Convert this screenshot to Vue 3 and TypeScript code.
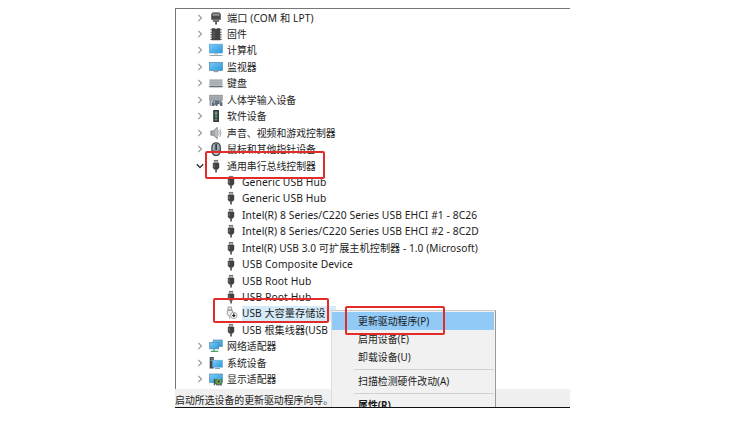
<script setup lang="ts">
interface Row {
  label: string
  icon: string
  child?: boolean
  open?: boolean
  selected?: boolean
  tone?: string
}

const usb = (label: string, tone = 'latin'): Row => ({ label, icon: 'usb', child: true, tone })

const rows: Row[] = [
  { label: '端口 (COM 和 LPT)', icon: 'port', tone: 'ports' },
  { label: '固件', icon: 'chip' },
  { label: '计算机', icon: 'computer' },
  { label: '监视器', icon: 'monitor' },
  { label: '键盘', icon: 'keyboard' },
  { label: '人体学输入设备', icon: 'hid' },
  { label: '软件设备', icon: 'software' },
  { label: '声音、视频和游戏控制器', icon: 'sound' },
  { label: '鼠标和其他指针设备', icon: 'mouse' },
  { label: '通用串行总线控制器', icon: 'usb', open: true },
  usb('Generic USB Hub'),
  usb('Generic USB Hub'),
  usb('Intel(R) 8 Series/C220 Series USB EHCI #1 - 8C26', 'latin long'),
  usb('Intel(R) 8 Series/C220 Series USB EHCI #2 - 8C2D', 'latin long'),
  usb('Intel(R) USB 3.0 可扩展主机控制器 - 1.0 (Microsoft)', 'mixed'),
  usb('USB Composite Device'),
  usb('USB Root Hub'),
  usb('USB Root Hub'),
  { label: 'USB 大容量存储设', icon: 'usbdown', child: true, selected: true, tone: 'mixed' },
  usb('USB 根集线器(USB', 'mixed'),
  { label: '网络适配器', icon: 'network' },
  { label: '系统设备', icon: 'system' },
  { label: '显示适配器', icon: 'display' },
]
</script>

<template>
  <main class="window">
    <ul class="tree">
      <li v-for="(row, i) in rows" :key="i" class="row" :class="{ child: row.child }">
        <svg v-if="!row.child" class="arrow" viewBox="0 0 8 8">
          <path v-if="row.open" d="M0.8 2.2 4 5.4 7.2 2.2" class="arrow-open" />
          <path v-else d="M2.3 0.8 5.5 4 2.3 7.2" class="arrow-closed" />
        </svg>
        <svg class="icon" viewBox="0 0 14 14">
          <defs>
            <linearGradient id="screen" x1="0" y1="0" x2="1" y2="1">
              <stop offset="0" stop-color="#7dcbf5" />
              <stop offset="1" stop-color="#279be0" />
            </linearGradient>
          </defs>
          <g v-if="row.icon === 'port'">
            <path d="M3.2 1.2h7.6v2H3.2z" fill="#777" />
            <path d="M2.2 2.6h9.6v6.2H2.2z" fill="#4c4c4c" />
            <path d="M3.6 3.2h6.8v1.4H3.6z" fill="#a5a5a5" />
            <path d="M3.8 8.8h6.4v2.2H3.8z" fill="#8b8b8b" />
            <path d="M5 8.8v2M7 8.8v2M9 8.8v2" stroke="#4a4a4a" stroke-width=".7" />
            <path d="M6.2 10.8h1.7v2.8H6.2z" fill="#444" />
          </g>
          <g v-else-if="row.icon === 'chip'">
            <path d="M2.8 1.2h2.8l1.4.9 1.4-.9h2.8v12H2.8z" fill="#434343" />
            <path d="M1.5 2.8h1.6M1.5 5.2h1.6M1.5 7.6h1.6M1.5 10h1.6M1.5 12.4h1.6M11 2.8h1.6M11 5.2h1.6M11 7.6h1.6M11 10h1.6M11 12.4h1.6" stroke="#555" stroke-width="1.1" />
            <path d="M5 4v7.5" stroke="#696969" />
          </g>
          <g v-else-if="row.icon === 'computer'">
            <rect x=".3" y="1.2" width="13.2" height="8.8" fill="url(#screen)" stroke="#4b9dce" stroke-width=".6" />
            <path d="M5 10h4v1.5H5z" fill="#b8c7cf" />
            <path d="M.5 12.5h13" stroke="#8f9ba2" stroke-width=".9" />
          </g>
          <g v-else-if="row.icon === 'monitor'">
            <rect x=".4" y="2.4" width="13.1" height="8" fill="url(#screen)" stroke="#5289ac" stroke-width=".7" />
            <path d="M4.5 11.6h5" stroke="#9aa6ac" stroke-width="1.2" />
          </g>
          <g v-else-if="row.icon === 'keyboard'">
            <rect x=".4" y="3.2" width="13.2" height="7.8" fill="#b7bdc1" />
            <path d="M1 4.7h12M1 6.5h12M1 8.3h12" stroke="#949ca1" stroke-width=".8" stroke-dasharray="1.4 .3" />
            <path d="M.4 10.7h13.2" stroke="#5c6469" stroke-width="1.2" />
          </g>
          <g v-else-if="row.icon === 'hid'">
            <path d="M.7 2.3h12.6v5H.7z" fill="#aeb5b9" stroke="#737b80" stroke-width=".7" />
            <path d="M2 4h10M2 5.6h10" stroke="#7c858b" stroke-width=".6" stroke-dasharray="1 .5" />
            <path d="M.6 7.4h2v5.4h-2z" fill="#8f989e" />
            <path d="M3 13V9.4l1.4-1.8h7.2L13.4 9.6V13h-2l-1-2H9l-.8 2H6.8L6 11.2l-1 1.8z" fill="#5f6c79" />
            <path d="M5.3 8.4v2M10.8 8.4v2" stroke="#c8d4dc" />
          </g>
          <g v-else-if="row.icon === 'software'">
            <path d="M4.2 1h5.8v12H4.2z" fill="#343b38" />
            <path d="M6 2.2h2.3v7H6z" fill="#4c8b68" />
            <path d="M5.5 4.2h3M5.5 10.8h3" stroke="#a7b1ac" stroke-width=".8" />
          </g>
          <g v-else-if="row.icon === 'sound'">
            <path d="M1.8 5h2.4l4-3.6v11.2L4.2 9.2H1.8z" fill="#a4a8aa" stroke="#777d80" stroke-width=".8" />
            <path d="M7.1 3v8" stroke="#d9d9d9" />
            <path d="M9.5 4.5q1.4 2.5 0 5M10.8 3q2.4 4 0 8" fill="none" stroke="#8b9093" stroke-width=".8" />
          </g>
          <g v-else-if="row.icon === 'mouse'">
            <rect x="3" y=".8" width="8.2" height="12.6" rx="4.1" fill="#c3cbd1" stroke="#343c45" stroke-width="1.3" />
            <path d="M5.2 2v6M9 2v6" stroke="#7b8692" stroke-width="1" />
            <path d="M7.1 2v6" stroke="#1f2934" stroke-width="1.5" />
            <path d="M3.2 8.2q4 1.5 8 0" fill="none" stroke="#58616a" stroke-width=".7" />
          </g>
          <g v-else-if="row.icon === 'usb'">
            <path d="M4.8.9h4.4v3.5H4.8z" fill="#777" />
            <path d="M5.7 1.9h.8v1.5h-.8zM7.5 1.9h.8v1.5h-.8z" fill="#eee" />
            <path d="M3.8 4.1h6.4v4.7L8.9 10.4H5.1L3.8 8.8z" fill="#414141" />
            <path d="M5.1 5.1v3.2" stroke="#8a8a8a" stroke-width=".8" />
            <path d="M6.2 10h1.7v3.6H6.2z" fill="#505050" />
          </g>
          <g v-else-if="row.icon === 'usbdown'">
            <path d="M4 1h3.6v3H4zM3.3 4.3h5.2v4.2L7.2 10H4.6L3.3 8.5z" fill="#ececec" stroke="#8b8b8b" stroke-width=".8" />
            <path d="M5.8 10v3" stroke="#aaa" />
            <circle cx="9.8" cy="9.4" r="3.2" fill="#fff" stroke="#8a8a8a" stroke-width=".7" />
            <path d="M9.2 7.2h1.2v1.9h1.5l-2.1 2.4-2.1-2.4h1.5z" fill="#222" />
          </g>
          <g v-else-if="row.icon === 'network'">
            <rect x="4.2" y="1" width="9" height="6.5" fill="url(#screen)" stroke="#4a87aa" stroke-width=".7" />
            <rect x=".7" y="3.6" width="9" height="6.2" fill="url(#screen)" stroke="#4a87aa" stroke-width=".7" />
            <path d="M5 10v2.4M1.8 12.3h7.5" stroke="#47a36d" stroke-width="1.3" />
          </g>
          <g v-else-if="row.icon === 'system'">
            <path d="M.7 1h4.1v11.5H.7z" fill="#3e4850" />
            <path d="M1.5 2.7H4M1.5 4.4H4" stroke="#8eb3a4" stroke-width=".8" />
            <rect x="3.7" y="4.2" width="9.8" height="7" fill="url(#screen)" stroke="#6ba6c9" stroke-width=".6" />
            <path d="M6 12.5h5" stroke="#8da1ac" />
          </g>
          <g v-else>
            <rect x=".4" y="2" width="13" height="8.5" fill="url(#screen)" stroke="#5b8caa" stroke-width=".7" />
            <path d="M5.3 7h7.8v5.3H5.3z" fill="#428652" />
            <path d="M5.3 7v6.3M7 12.8h6" stroke="#38463d" />
            <circle cx="9.7" cy="9.5" r="1.7" fill="#253d2d" stroke="#c7cf70" stroke-width=".8" />
          </g>
        </svg>
        <span class="label" :class="[row.tone, { selected: row.selected }]">{{ row.label }}</span>
      </li>
    </ul>

    <footer class="status">启动所选设备的更新驱动程序向导。</footer>

    <nav class="menu">
      <div class="item active">更新驱动程序(P)</div>
      <div class="item">启用设备(E)</div>
      <div class="item">卸载设备(U)</div>
      <hr class="rule" />
      <div class="item scan">扫描检测硬件改动(A)</div>
      <hr class="rule" />
      <div class="item bold">属性(R)</div>
    </nav>

    <i class="mark mark-category"></i>
    <i class="mark mark-device"></i>
    <i class="mark mark-action"></i>
  </main>
</template>

<style>
body {
  background: #fff;
}
</style>

<style scoped>
.window {
  position: relative;
  box-sizing: border-box;
  width: 395px;
  height: 400px;
  margin: 8px 0 0 175px;
  overflow: hidden;
  border-top: 1px solid #777;
  border-bottom: 1.5px solid #111;
  background: #fff;
  color: #1c1c1c;
  font: 9.9px/16px "Noto Sans", "Noto Sans CJK SC", sans-serif;
  white-space: nowrap;
}
.tree {
  box-sizing: border-box;
  height: 380px;
  margin: 0;
  padding: 0.4px 0 0 20px;
  border-left: 1px solid #777;
  list-style: none;
}
.row {
  display: flex;
  align-items: center;
  height: 16.45px;
}
.child {
  padding-left: 28px;
}
.arrow {
  width: 8px;
  height: 8px;
  margin-right: 5px;
  fill: none;
}
.arrow-closed {
  stroke: #999;
  stroke-width: 1.2;
}
.arrow-open {
  stroke: #333;
  stroke-width: 1.4;
}
.icon {
  flex: none;
  width: 14px;
  height: 14px;
  margin-right: 4px;
}
.label {
  height: 16px;
}
.ports {
  font-size: 10.2px;
  letter-spacing: 0.1px;
}
.latin {
  font-size: 10.3px;
  letter-spacing: 0.1px;
}
.long {
  letter-spacing: 0.08px;
}
.mixed {
  font-size: 10.15px;
  letter-spacing: 0.06px;
}
.selected {
  width: 94px;
  height: 15px;
  line-height: 15px;
  background: #d6ebf9;
}
.status {
  height: 18px;
  background: #f0f0f0;
  line-height: 22px;
}
.menu {
  position: absolute;
  left: 156px;
  top: 301px;
  box-sizing: border-box;
  width: 165px;
  height: 100px;
  padding: 1px 1px 0 0;
  border-top: 1px solid #ccc;
  border-left: 1px solid #ddd;
  border-right: 1.5px solid #999;
  background: #f1f1f1;
}
.item {
  height: 18px;
  padding-left: 26px;
  line-height: 18px;
}
.active {
  background: #91c9f7;
}
.rule {
  margin: 3px 0 2px 22px;
  border: 0;
  border-top: 1px solid #d2d2d2;
}
.bold {
  font-weight: 700;
}
.mark {
  position: absolute;
  box-sizing: border-box;
  border: 2px solid #e32b29;
  border-radius: 2px;
}
.mark-category {
  left: 30px;
  top: 142px;
  width: 120px;
  height: 28px;
}
.mark-device {
  left: 38px;
  top: 289px;
  width: 116px;
  height: 25px;
}
.mark-action {
  left: 170px;
  top: 297px;
  width: 100px;
  height: 29px;
}
</style>
